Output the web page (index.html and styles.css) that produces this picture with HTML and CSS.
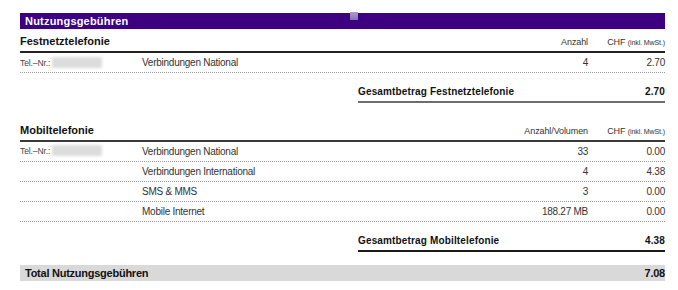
FILE: index.html
```html
<!DOCTYPE html>
<html lang="de">
<head>
<meta charset="utf-8">
<title>Nutzungsgebühren</title>
<link rel="stylesheet" href="styles.css">
</head>
<body>
<div class="sheet">
  <div class="bar"><span class="bar-title">Nutzungsgebühren</span><i class="marker"></i></div>

  <section class="group">
    <div class="head">
      <h2 class="head-title">Festnetztelefonie</h2>
      <span class="qty-h">Anzahl</span>
      <span class="chf-h">CHF <small>(inkl. MwSt.)</small></span>
    </div>
    <div class="row">
      <span class="tel">Tel.–Nr.:<i class="blur"></i></span>
      <span class="desc">Verbindungen National</span>
      <span class="qty">4</span>
      <span class="amt">2.70</span>
    </div>
    <div class="sum sum-grey">
      <span>Gesamtbetrag Festnetztelefonie</span>
      <span>2.70</span>
    </div>
  </section>

  <section class="group group-mobile">
    <div class="head">
      <h2 class="head-title">Mobiltelefonie</h2>
      <span class="qty-h">Anzahl/Volumen</span>
      <span class="chf-h">CHF <small>(inkl. MwSt.)</small></span>
    </div>
    <div class="row">
      <span class="tel tel-up">Tel.–Nr.:<i class="blur"></i></span>
      <span class="desc">Verbindungen National</span>
      <span class="qty">33</span>
      <span class="amt">0.00</span>
    </div>
    <div class="row">
      <span class="tel"></span>
      <span class="desc">Verbindungen International</span>
      <span class="qty">4</span>
      <span class="amt">4.38</span>
    </div>
    <div class="row">
      <span class="tel"></span>
      <span class="desc">SMS &amp; MMS</span>
      <span class="qty">3</span>
      <span class="amt">0.00</span>
    </div>
    <div class="row">
      <span class="tel"></span>
      <span class="desc">Mobile Internet</span>
      <span class="qty">188.27 MB</span>
      <span class="amt">0.00</span>
    </div>
    <div class="sum">
      <span>Gesamtbetrag Mobiltelefonie</span>
      <span>4.38</span>
    </div>
  </section>

  <div class="total">
    <span>Total Nutzungsgebühren</span>
    <span>7.08</span>
  </div>
</div>
</body>
</html>
```
FILE: styles.css
```css
* { box-sizing: border-box; }

html, body {
  margin: 0;
  padding: 0;
  background: #ffffff;
}

body {
  font-family: "Liberation Sans", Arial, sans-serif;
  color: #333333;
  padding-top: 13px;
}

.sheet {
  margin-left: 20px;
  width: 645px;
}

.bar {
  position: relative;
  height: 16px;
  background: #3d0080;
  display: flex;
  align-items: center;
  padding-left: 5px;
}

.bar-title {
  color: #ffffff;
  font-weight: bold;
  font-size: 11px;
  letter-spacing: 0.2px;
  line-height: 16px;
}

.marker {
  position: absolute;
  left: 330px;
  top: -1px;
  width: 8px;
  height: 8px;
  background: linear-gradient(#ab9bd3, #8672b9);
}

.head {
  display: grid;
  grid-template-columns: 1fr 140px 77px;
  align-items: baseline;
  padding-top: 5px;
  padding-bottom: 3px;
  border-bottom: 2px solid #222222;
}

.group-mobile { margin-top: 15px; }
.group-mobile .head { border-bottom-color: #3a3a3a; }

.head-title {
  margin: 0;
  font-size: 11px;
  line-height: 14px;
  font-weight: bold;
  color: #111111;
  letter-spacing: 0;
}

.qty-h, .chf-h {
  text-align: right;
  font-size: 9px;
  color: #333333;
  letter-spacing: -0.1px;
}

.chf-h small {
  font-size: 7px;
}

.row {
  display: grid;
  grid-template-columns: 122px 1fr 140px 77px;
  align-items: center;
  height: 20px;
  border-bottom: 1px dotted #9a9a9a;
  font-size: 10px;
  letter-spacing: -0.25px;
  color: #333333;
}

.tel {
  display: flex;
  align-items: center;
  font-size: 8.5px;
  letter-spacing: -0.1px;
  color: #444444;
}

.tel-up { position: relative; top: -1px; }

.blur {
  display: inline-block;
  width: 50px;
  height: 11px;
  margin-left: 2px;
  background: #dcdcdc;
  filter: blur(1.5px);
}

.qty, .amt { text-align: right; }

.sum {
  margin-top: 9px;
  margin-left: 338px;
  height: 21px;
  display: flex;
  justify-content: space-between;
  align-items: center;
  border-bottom: 2px solid #1a1a1a;
  font-size: 10px;
  font-weight: bold;
  color: #111111;
  letter-spacing: 0.15px;
}

.sum-grey { border-bottom-color: #6e6e6e; }

.total {
  margin-top: 13px;
  height: 16px;
  background: #d9d9d9;
  display: flex;
  justify-content: space-between;
  align-items: center;
  padding-left: 5px;
  font-size: 11px;
  font-weight: bold;
  color: #111111;
  letter-spacing: -0.25px;
}
```
